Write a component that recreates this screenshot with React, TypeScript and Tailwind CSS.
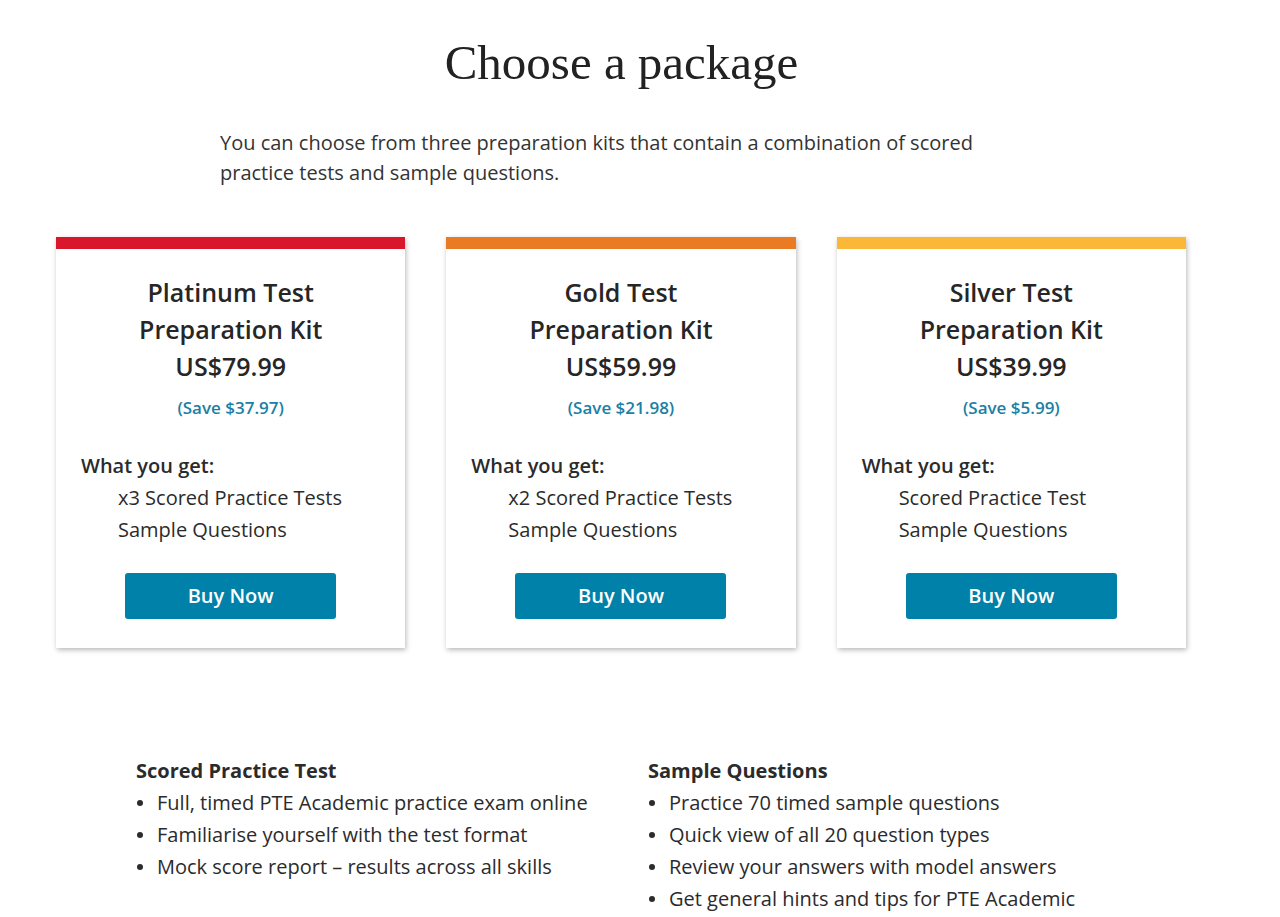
import * as React from 'react';

type Kit = {
  name: string;
  price: string;
  save: string;
  bar: string;
  items: string[];
};

const kits: Kit[] = [
  {
    name: 'Platinum Test',
    price: 'US$79.99',
    save: '(Save $37.97)',
    bar: 'bg-[#d8172d]',
    items: ['x3 Scored Practice Tests', 'Sample Questions'],
  },
  {
    name: 'Gold Test',
    price: 'US$59.99',
    save: '(Save $21.98)',
    bar: 'bg-[#e87b24]',
    items: ['x2 Scored Practice Tests', 'Sample Questions'],
  },
  {
    name: 'Silver Test',
    price: 'US$39.99',
    save: '(Save $5.99)',
    bar: 'bg-[#fbb737]',
    items: ['Scored Practice Test', 'Sample Questions'],
  },
];

const scored = [
  'Full, timed PTE Academic practice exam online',
  'Familiarise yourself with the test format',
  'Mock score report \u2013 results across all skills',
];

const samples = [
  'Practice 70 timed sample questions',
  'Quick view of all 20 question types',
  'Review your answers with model answers',
  'Get general hints and tips for PTE Academic',
];

function KitCard({ kit }: { kit: Kit }) {
  return (
    <div className="flex flex-col bg-white shadow-[1px_2px_5px_rgba(0,0,0,0.28)]">
      <div className={`h-[12px] ${kit.bar}`} />
      <div className="flex flex-col px-[25px] pt-[25px] pb-[29px]">
        <div className="text-center text-[25px] leading-[37px] font-semibold text-[#262626]">
          <div>{kit.name}</div>
          <div>Preparation Kit</div>
          <div>{kit.price}</div>
        </div>
        <div className="mt-[11px] text-center text-[17px] leading-[24px] font-semibold text-[#1b80a4]">
          {kit.save}
        </div>
        <div className="mt-[30px] text-[20px] leading-[32px] text-[#2b2b2b]">
          <div className="font-semibold">What you get:</div>
          {kit.items.map(item => (
            <div key={item} className="pl-[37px]">{item}</div>
          ))}
        </div>
        <button className="mx-auto mt-[27px] h-[46px] w-[211px] rounded-[3px] bg-[#0081a9] text-[20px] font-semibold text-white">
          Buy Now
        </button>
      </div>
    </div>
  );
}

function BulletList({ title, items }: { title: string; items: string[] }) {
  return (
    <div className="text-[20px] leading-[32px] text-[#2b2b2b]">
      <div className="font-bold">{title}</div>
      {items.map(item => (
        <div key={item} className="flex items-center">
          <span className="flex w-[21px] shrink-0 items-center pl-[1px]">
            <span className="h-[6px] w-[6px] rounded-full bg-[#2b2b2b]" />
          </span>
          <span>{item}</span>
        </div>
      ))}
    </div>
  );
}

export default function App() {
  return (
    <div className="min-h-[917px] bg-white font-['Open_Sans',sans-serif]">
      <div className="ml-[56px] w-[1131px] pt-[34px]">
        <h1 className="text-center font-['Liberation_Serif',serif] text-[49px] leading-[58px] font-normal text-[#222]">
          Choose a package
        </h1>
        <p className="ml-[164px] mt-[36px] w-[800px] text-[20px] leading-[30px] text-[#333]">
          You can choose from three preparation kits that contain a combination of scored practice tests and sample questions.
        </p>
        <div className="mt-[49px] grid grid-cols-3 gap-[41px] pr-[1px]">
          {kits.map(kit => (
            <KitCard key={kit.name} kit={kit} />
          ))}
        </div>
        <div className="mt-[107px] ml-[80px] grid grid-cols-[512px_1fr]">
          <BulletList title="Scored Practice Test" items={scored} />
          <BulletList title="Sample Questions" items={samples} />
        </div>
      </div>
    </div>
  );
}
